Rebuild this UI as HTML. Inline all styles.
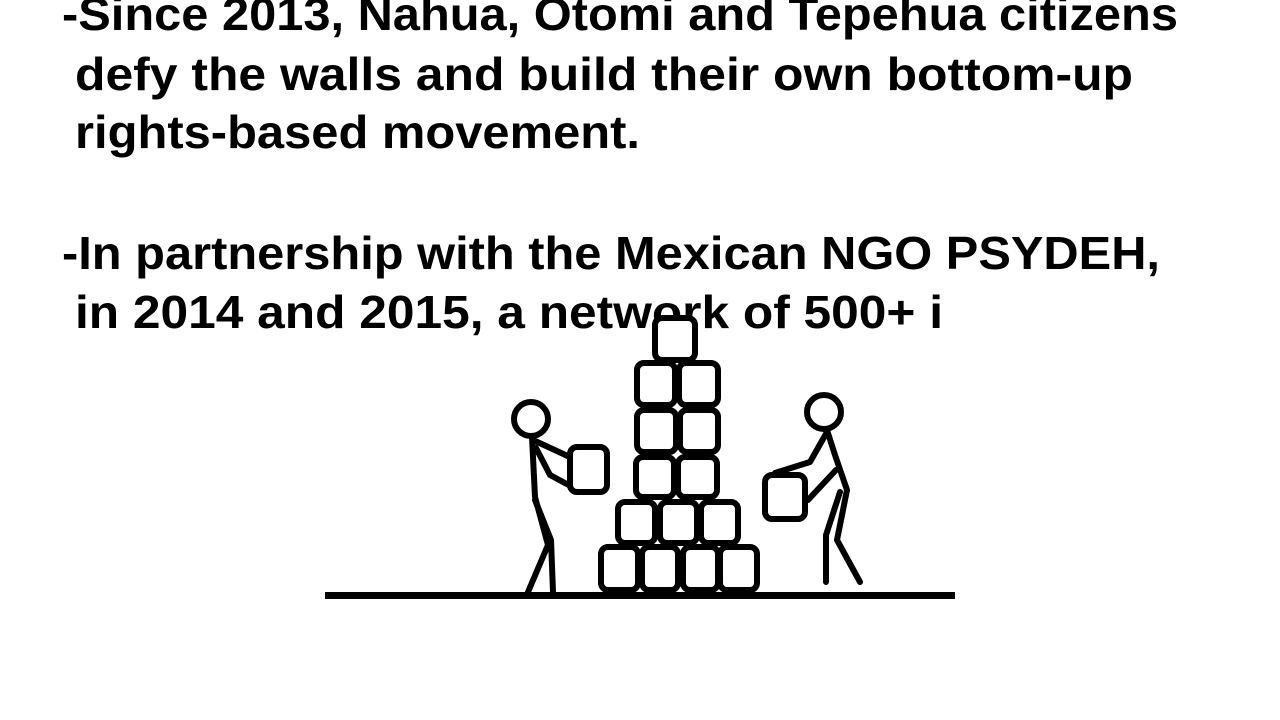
<!DOCTYPE html>
<html><head><meta charset="utf-8"><style>
html,body{margin:0;padding:0;background:#fff;width:1280px;height:720px;overflow:hidden}
svg{display:block}
text{font-family:"Liberation Sans",sans-serif;font-weight:bold;font-size:46px;fill:#000}
</style></head><body>
<svg width="1280" height="720" viewBox="0 0 1280 720">
<text x="62" y="30" textLength="1116" lengthAdjust="spacingAndGlyphs">-Since 2013, Nahua, Otomi and Tepehua citizens</text>
<text x="75" y="90" textLength="1058" lengthAdjust="spacingAndGlyphs">defy the walls and build their own bottom-up</text>
<text x="75" y="148" textLength="565" lengthAdjust="spacingAndGlyphs">rights-based movement.</text>
<text x="62" y="269" textLength="1098" lengthAdjust="spacingAndGlyphs">-In partnership with the Mexican NGO PSYDEH,</text>
<text x="75" y="328" textLength="868" lengthAdjust="spacingAndGlyphs">in 2014 and 2015, a network of 500+ i</text>
<g fill="#fff" stroke="#000" stroke-width="6" stroke-linejoin="round" stroke-linecap="round">
<rect x="655" y="318" width="40" height="42" rx="7"/>
<rect x="637" y="363" width="38" height="42" rx="7"/>
<rect x="679" y="363" width="39" height="42" rx="7"/>
<rect x="637" y="410" width="39" height="42" rx="7"/>
<rect x="680" y="410" width="38" height="42" rx="7"/>
<rect x="636" y="457" width="38" height="40" rx="7"/>
<rect x="678" y="457" width="39" height="40" rx="7"/>
<rect x="618" y="502" width="37" height="41" rx="7"/>
<rect x="660" y="502" width="37" height="41" rx="7"/>
<rect x="701" y="502" width="37" height="41" rx="7"/>
<rect x="601" y="547" width="37" height="43" rx="7"/>
<rect x="642" y="547" width="36" height="43" rx="7"/>
<rect x="683" y="547" width="35" height="43" rx="7"/>
<rect x="720" y="547" width="37" height="43" rx="7"/>
<circle cx="531" cy="419" r="17"/>
<circle cx="824" cy="412" r="17"/>
<polyline fill="none" points="532,437 535,497 548,545 528,592"/>
<polyline fill="none" points="535,500 551,540 553,592"/>
<polyline fill="none" points="533,440 572,458"/>
<polyline fill="none" points="536,448 550,475 578,490"/>
<rect x="570" y="447" width="37" height="45" rx="7"/>
<polyline fill="none" points="827,430 835,455 847,490 837,540 860,582"/>
<polyline fill="none" points="840,492 826,535 826,582"/>
<polyline fill="none" points="827,432 810,462 775,473"/>
<polyline fill="none" points="836,470 808,500"/>
<rect x="765" y="475" width="40" height="44" rx="7"/>
</g>
<rect x="325" y="592" width="630" height="7" fill="#000"/>
</svg>
</body></html>
